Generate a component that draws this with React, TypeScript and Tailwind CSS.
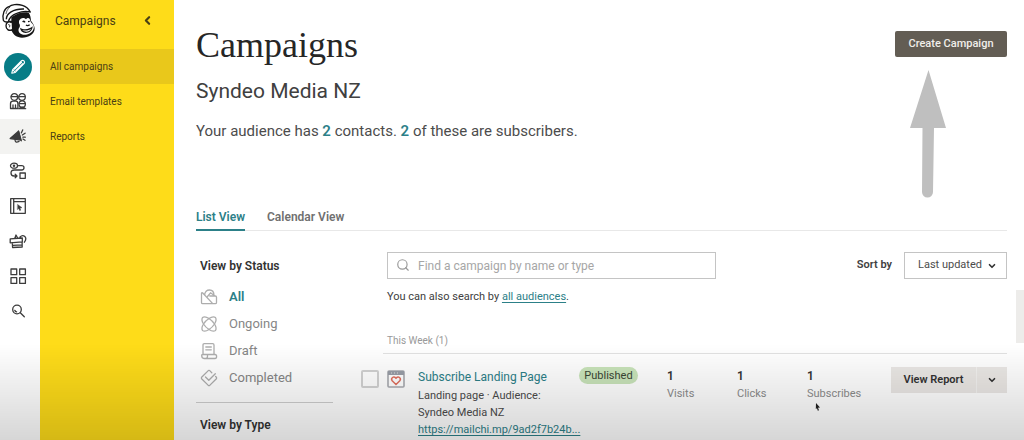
import React from "react";
import { ChevronDown, ChevronLeft, Search } from "lucide-react";

interface RailItem {
  id: string;
  label: string;
  icon: React.ReactNode;
}

interface Stat {
  label: string;
  value: number;
}

const Icon: React.FC<{ size?: number; children: React.ReactNode }> = ({
  size = 18,
  children,
}) => (
  <svg
    width={size}
    height={size}
    viewBox="0 0 18 18"
    fill="none"
    stroke="currentColor"
    strokeWidth="1.3"
    strokeLinecap="round"
    strokeLinejoin="round"
    aria-hidden="true"
  >
    {children}
  </svg>
);

const Logo = () => (
  <svg width="40" height="40" viewBox="0 0 120 120" aria-hidden="true">
    {/* head */}
    <path
      d="M34 52 C50 40 70 34 86 38 C92 46 92 54 93 62 C99 70 104 78 104 86 C103 102 86 113 66 113 C50 112 40 104 35 92 C26 96 18 88 18 78 C18 68 24 62 34 62Z"
      fill="#161616"
    />
    {/* ear */}
    <path
      d="M35 68 C27 62 18 67 18 77 C18 88 27 94 36 89"
      fill="#fff"
      stroke="#161616"
      strokeWidth="4"
    />
    <path d="M25 74 C30 73 30 78 28 82" fill="none" stroke="#161616" strokeWidth="3" />
    {/* face */}
    <path
      d="M57 63 C61 53 72 51 78 58 C83 51 90 54 91 63 C93 69 98 71 101 77 C104 89 94 101 78 104 C63 106 53 97 56 86 C62 80 60 74 57 70Z"
      fill="#fff"
    />
    <path d="M68 66 Q72 61 75 67 M84 65 L89 64" fill="none" stroke="#161616" strokeWidth="4" />
    <path d="M78 75 Q83 79 89 74" fill="none" stroke="#161616" strokeWidth="4" />
    <path
      d="M60 83 C73 91 88 88 98 79 C98 92 88 99 77 99 C67 98 61 92 60 83Z"
      fill="#161616"
    />
    <path d="M67 90 C78 94 88 90 94 86 C88 96 75 98 67 90Z" fill="#fff" />
    {/* sailor cap */}
    <path
      d="M10 61 C6 42 13 25 27 20 C34 14 51 11 67 16 C77 19 85 25 91 36 C78 32 62 35 50 40 C34 46 27 57 25 65 C18 67 12 66 10 61Z"
      fill="#fff"
      stroke="#161616"
      strokeWidth="4"
      strokeLinejoin="round"
    />
    <path d="M19 58 C19 41 39 26 72 27" fill="none" stroke="#161616" strokeWidth="4" />
    <path d="M30 21 C23 27 19 34 18 42" fill="none" stroke="#161616" strokeWidth="2" />
  </svg>
);

const railItems: RailItem[] = [
  {
    id: "audience",
    label: "Audience",
    icon: (
      <Icon>
        <circle cx="5.3" cy="5" r="3.3" />
        <circle cx="13" cy="5" r="3.3" />
        <path d="M2.3 4.6h6M10 4.6h6M1.5 16.5V11.7q0-2.5 2.4-2.5h3q2 0 2 2.5v4.8zM4 16v-3M6.5 16v-3" />
        <circle cx="13.2" cy="12" r="3.2" />
        <path d="M9.7 16.7q3.5-2.6 7 0zM10.5 11.7h5.5" />
      </Icon>
    ),
  },
  {
    id: "campaigns",
    label: "Campaigns",
    icon: (
      <Icon>
        <path d="M1.2 11.6 9.5 4.2l2.2 8.9z" fill="currentColor" />
        <path d="M6 13q.4 3.4 4 1.4M9.5 4.2 12.3 13.8M12.3 5.9l1.4-3M13.3 8l2.8-1.8M13.9 10.2h2.4M14 12l2 1.3" />
      </Icon>
    ),
  },
  {
    id: "automations",
    label: "Automations",
    icon: (
      <Icon>
        <ellipse cx="5" cy="3.7" rx="3.5" ry="2.5" />
        <circle cx="5" cy="3.7" r=".6" />
        <path d="M9.5 3.7h3.2q2.3 0 2.3 2.1T12.7 8H5.2Q2 8 2 11t3 3h2.7M6.2 12.2 8 14l-1.8 1.8M11 11h5.3v5.3H11z" />
      </Icon>
    ),
  },
  {
    id: "website",
    label: "Website",
    icon: (
      <Icon>
        <path d="M1.7 1.7h14.6v14.6H1.7zM4.7 1.7v14.6M4.7 4.7h11.6" />
        <path
          d="m8.7 7.5 4.3 3.2-2 .3.8 2.2-1.2.4-.8-2.2-1.2 1z"
          fill="currentColor"
          strokeWidth=".4"
        />
      </Icon>
    ),
  },
  {
    id: "content",
    label: "Content Studio",
    icon: (
      <Icon>
        <path d="M1.2 6.9 13.3 6v3.9L1.2 10.8zM3.3 10.7l.3 4.8 9.6-.5-.1-5M4 13.3l9-.5M5.8 6.5 7 3l1.8 3.2M11 5q2.6-2.4 4.8-.4t-.4 5.6" />
      </Icon>
    ),
  },
  {
    id: "integrations",
    label: "Integrations",
    icon: (
      <Icon>
        <path d="M2 2h5.7v5.7H2zM10.7 2h5.7v5.7h-5.7zM2 10.7h5.7v5.7H2zM10.7 10.7h5.7v5.7h-5.7z" />
      </Icon>
    ),
  },
  {
    id: "search",
    label: "Search",
    icon: (
      <Icon>
        <circle cx="8" cy="7.5" r="4.3" />
        <path d="m11.3 10.8 4 4M5.8 8.3q.4 1.4 1.8 1.5" />
      </Icon>
    ),
  },
];

const menuItems = ["All campaigns", "Email templates", "Reports"];

const statusItems = [
  {
    label: "All",
    icon: (
      <path d="M1.5 5.5v9q0 1.2 1.2 1.2h12.6q1.2 0 1.2-1.2V9.2q0-1.2-1.2-1.2H9.8M1.5 5.5q0-1 1-.7l10 10.6M4.7 7.2C4.7 3.5 7 2 9.5 2s4.5 2 4.5 5.5M7.5 8.5l3-3.7 4.5 3.2" />
    ),
  },
  {
    label: "Ongoing",
    icon: (
      <>
        <path d="M9 3.5q3.5 2.3 5.5 5.5-2 3.3-5.5 5.5Q5.5 12.3 3.5 9 5.5 5.7 9 3.5z" />
        <path d="M9 3.5Q5 .8 2.500 2.500 1 5 3.500 9 1 13 2.500 15.500 5 17.200 9 14.500q4 2.700 6.500 1Q17 13 14.500 9 17 5 15.500 2.500 13 .8 9 3.500z" />
      </>
    ),
  },
  {
    label: "Draft",
    icon: (
      <path d="M3 12V3q0-1.300 1.300-1.300h8.400Q14 1.700 14 3v9.500M5.800 5h5.500M5.800 7.800h5.500M7 12.500H2.500q-.8 0-.8.800 0 3.200 2.300 3.200h11q1.600 0 1.600-2t-1.600-2H7.500v1.700q0 2.300-2 2.300" />
    ),
  },
  {
    label: "Completed",
    icon: (
      <path d="M11.800 3.700 9.700 1.600q-.7-.6-1.400 0L1.600 8.300q-.6.7 0 1.400l6.700 6.700q.7.600 1.400 0l6.700-6.700q.6-.7 0-1.400l-.8-.8M5.500 8l3.300 3.300 6.500-6.500" />
    ),
  },
];

const stats: Stat[] = [
  { label: "Visits", value: 1 },
  { label: "Clicks", value: 1 },
  { label: "Subscribes", value: 1 },
];

const Rail = () => (
  <nav aria-label="Main" className="flex w-10 shrink-0 flex-col items-center bg-white">
    <a href="#home" aria-label="Home">
      <Logo />
    </a>
    <button
      aria-label="Create"
      className="mt-[13px] mr-1 mb-[3px] flex size-7 items-center justify-center rounded-full bg-[#077c86] text-white"
    >
      <Icon size={16}>
        <path d="m2 16 1-4L13 2q1.500-1 2.700.2T16 5L6 15zM3 12l3 3M5 11.500 13 3.700M6.500 13l8-7.800" />
      </Icon>
    </button>
    {railItems.map((item) => (
      <a
        key={item.id}
        href={`#${item.id}`}
        aria-label={item.label}
        className={`flex h-[35px] w-full items-center justify-center pr-1 pb-[2px] text-[#3c3c3c] ${
          item.id === "campaigns" ? "bg-[#f3f3f1]" : ""
        }`}
      >
        {item.icon}
      </a>
    ))}
  </nav>
);

const Menu = () => (
  <nav aria-label="Campaigns" className="w-[134px] shrink-0 bg-[#fedc19] text-[#4a4014]">
    <div className="flex h-[49px] items-center justify-between pr-5 pb-2 pl-[15px]">
      <span className="text-[12px]">Campaigns</span>
      <button aria-label="Collapse menu">
        <ChevronLeft size={13} strokeWidth={4} />
      </button>
    </div>
    {menuItems.map((label, i) => (
      <a
        key={label}
        href="#campaigns"
        className={`flex h-[35px] items-center pb-px pl-[10px] text-[10px] ${
          i === 0 ? "bg-[#e9c81b]" : ""
        }`}
      >
        {label}
      </a>
    ))}
  </nav>
);

const Filters = () => (
  <aside className="w-[137px] shrink-0">
    <h3 className="pt-1 pl-1 text-[12px] leading-5 font-semibold text-[#333]">View by Status</h3>
    <ul className="mt-[7px] border-b border-[#cfcfcf] pb-[11px] pl-1">
      {statusItems.map((item) => (
        <li key={item.label}>
          <a
            href={`#${item.label.toLowerCase()}`}
            className="flex h-[27px] items-center gap-[11px] text-[13px]"
          >
            <span className="text-[#adadad]">
              <Icon>{item.icon}</Icon>
            </span>
            <span
              className={
                item.label === "All" ? "font-semibold text-[#2c8088]" : "text-[#868686]"
              }
            >
              {item.label}
            </span>
          </a>
        </li>
      ))}
    </ul>
    <h3 className="mt-3 pl-1 text-[12px] leading-5 font-semibold text-[#333]">View by Type</h3>
  </aside>
);

const CampaignRow = () => (
  <div className="flex items-start pt-[13px]">
    <input
      type="checkbox"
      aria-label="Select Subscribe Landing Page"
      className="mt-[3px] size-[18px] shrink-0 appearance-none rounded-xs border-2 border-[#d2d2d2]"
    />
    <svg
      className="mt-[3px] ml-2 shrink-0"
      width="18"
      height="18"
      viewBox="0 0 18 18"
      fill="none"
      aria-hidden="true"
    >
      <rect x="1" y="1" width="16" height="16" rx="1" stroke="#a9abb0" strokeWidth="1.6" />
      <path d="M1 1h16v4H1z" fill="#999ea7" />
      <path d="M4 3h1M7 3h1M10 3h1" stroke="#ddd" />
      <path
        d="M9 14.500 5.200 10.800Q3.800 8.800 5.500 7.500T9 8.200Q10.800 6.200 12.500 7.500T12.800 10.800z"
        stroke="#e0705f"
        strokeWidth="1.5"
      />
    </svg>
    <div className="ml-[13px] w-[158px] shrink-0 text-[11px] leading-[17px] text-[#4c4c4c]">
      <a href="#campaign" className="block text-[12px] leading-5 text-[#2c8088]">
        Subscribe Landing Page
      </a>
      <p>Landing page · Audience:</p>
      <p>Syndeo Media NZ</p>
      <a href="#landing" className="text-[#2c8088] underline underline-offset-2">
        https://mailchi.mp/9ad2f7b24b...
      </a>
    </div>
    <div className="ml-[3px] w-[59px] shrink-0 rounded-full bg-[#c9e4ba] text-center text-[11px] leading-[17px] text-[#3a4634]">
      Published
    </div>
    <dl className="ml-[29px] grid flex-1 grid-cols-3">
      {stats.map((stat) => (
        <div key={stat.label} className="relative flex flex-col-reverse">
          <dt className="text-[11px] leading-[17px] text-[#8c8c8c]">{stat.label}</dt>
          <dd className="text-[12px] leading-[18px] font-semibold text-[#333]">{stat.value}</dd>
          {stat.label === "Subscribes" && (
            <svg
              className="absolute top-9 left-2"
              width="6"
              height="8"
              viewBox="0 0 6 8"
              aria-hidden="true"
            >
              <path d="M1 0l4 4.500-2 .3 1 2.500-1.200.4L2 5.200.800 6z" fill="#222" />
            </svg>
          )}
        </div>
      ))}
    </dl>
    <div className="ml-[14px] flex h-[26px] shrink-0 divide-x divide-[#f3f2f0] bg-[#ebe8e5] text-[#333]">
      <button className="w-[86px] text-[11px] font-semibold">View Report</button>
      <button aria-label="More actions" className="flex w-[30px] items-center justify-center">
        <ChevronDown size={10} strokeWidth={4} />
      </button>
    </div>
  </div>
);

const App: React.FC = () => {
  return (
    <div className="relative flex min-h-screen bg-white font-[Roboto,sans-serif]">
      <Rail />
      <Menu />

      <main className="min-w-0 flex-1 pt-[25px] pr-[17px] pl-[22px]">
        <header className="flex items-start justify-between">
          <h1 className="font-['Liberation_Serif',serif] text-[36px] leading-10 text-[#262626]">
            Campaigns
          </h1>
          <div className="relative mt-[5px]">
            <button className="h-[26px] w-28 rounded-xs bg-[#635d54] text-[11px] font-medium text-[#f0eeea]">
              Create Campaign
            </button>
            {/* pointer arrow under the button */}
            <svg
              className="absolute top-10 left-3"
              width="40"
              height="130"
              viewBox="0 0 40 130"
              aria-hidden="true"
            >
              <path
                d="M21.500 0 39 58H27L26 122a5.500 5.500 0 0 1-11 0L15.500 58H3z"
                fill="#bfbfbf"
              />
            </svg>
          </div>
        </header>

        <h2 className="mt-3 text-[21px] leading-7 text-[#404040]">Syndeo Media NZ</h2>
        <p className="mt-4 text-[15px] leading-5 text-[#4c4c4c]">
          Your audience has <b className="font-semibold text-[#2c8088]">2</b> contacts.{" "}
          <b className="font-semibold text-[#2c8088]">2</b> of these are subscribers.
        </p>

        <div className="mt-[66px] flex gap-[22px] border-b border-[#e8e8e8] text-[12px] leading-5 font-semibold">
          <a href="#list" className="-mb-px border-b-2 border-[#2c8088] pb-[2px] text-[#2c8088]">
            List View
          </a>
          <a href="#calendar" className="text-[#707070]">
            Calendar View
          </a>
        </div>

        <div className="mt-[21px] flex gap-7">
          <Filters />
          <section className="min-w-0 flex-1">
            <div className="flex items-center justify-between pl-[26px]">
              <div className="relative w-[329px]">
                <Search
                  size={14}
                  className="absolute top-[6px] left-[9px] text-[#999]"
                  aria-hidden="true"
                />
                <input
                  type="search"
                  aria-label="Find a campaign"
                  placeholder="Find a campaign by name or type"
                  className="block h-[27px] w-full border border-[#c4c4c4] pl-[30px] text-[12px] placeholder:text-[#a6a6a6]"
                />
              </div>
              <div className="flex items-center gap-3">
                <label htmlFor="sort" className="text-[11px] font-semibold text-[#404040]">
                  Sort by
                </label>
                <div className="relative">
                  <select
                    id="sort"
                    className="block h-[27px] w-[103px] appearance-none border border-[#c4c4c4] bg-white pl-[13px] text-[11px] text-[#4c4c4c]"
                  >
                    <option>Last updated</option>
                    <option>Last created</option>
                  </select>
                  <ChevronDown
                    size={10}
                    strokeWidth={4}
                    className="pointer-events-none absolute top-[9px] right-[10px] text-[#333]"
                  />
                </div>
              </div>
            </div>

            <p className="mt-[9px] pl-[26px] text-[11px] leading-[17px] text-[#404040]">
              You can also search by{" "}
              <a href="#audiences" className="text-[#2c8088] underline underline-offset-2">
                all audiences
              </a>
              .
            </p>

            <div className="mt-[27px] ml-[22px] border-b border-[#e2e2e2] pb-1 pl-1 text-[10px] leading-[17px] text-[#999]">
              This Week (1)
            </div>
            <CampaignRow />
          </section>
        </div>
      </main>

      {/* feedback tab on the window edge */}
      <div className="fixed top-[290px] right-0 h-[53px] w-2 bg-[#edecea]" />
      <div className="pointer-events-none fixed inset-x-0 bottom-0 h-24 bg-linear-to-b from-transparent to-black/16" />
    </div>
  );
};

export default App;
